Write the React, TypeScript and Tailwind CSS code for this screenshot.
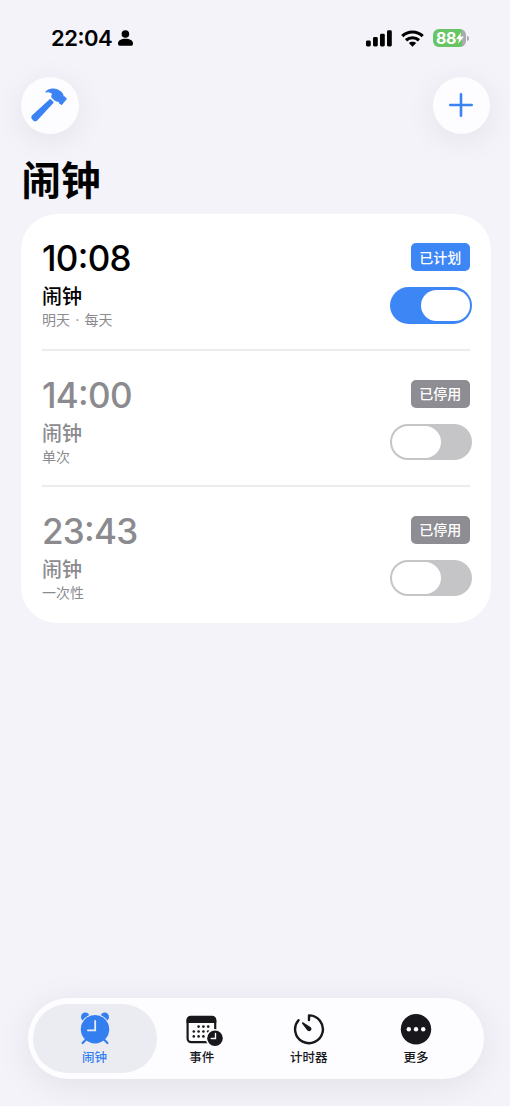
import React from "react";
import { clsx } from "clsx";

type Alarm = {
  time: string;
  title: string;
  note: string;
  status: string;
  enabled: boolean;
};

const alarms: Alarm[] = [
  { time: "10:08", title: "闹钟", note: "明天 · 每天", status: "已计划", enabled: true },
  { time: "14:00", title: "闹钟", note: "单次", status: "已停用", enabled: false },
  { time: "23:43", title: "闹钟", note: "一次性", status: "已停用", enabled: false },
];

const StatusBar = () => (
  <header className="flex h-[76.5px] items-center justify-between pl-[51px] pr-[41px]">
    <div className="flex items-center gap-[6px]">
      <span className="text-[22px] font-semibold leading-none tracking-[-0.5px] [font-feature-settings:'case']">22:04</span>
      <svg className="h-[16px] w-[15px]" viewBox="0 0 15 16">
        <circle cx="7.4" cy="4" r="3.8" />
        <path d="M0 13.400C0 10.500 3.300 8.800 7.500 8.800S15 10.500 15 13.400C15 15 14.200 15.800 12.800 15.800H2.200C.8 15.800 0 15 0 13.400Z" />
      </svg>
    </div>
    <div className="flex items-center">
      <svg className="h-[17px] w-[26px]" viewBox="0 0 26 17">
        <rect x="0" y="10.5" width="4.8" height="6" rx="1.4" />
        <rect x="7" y="7" width="4.8" height="9.5" rx="1.4" />
        <rect x="14" y="3.7" width="4.8" height="12.8" rx="1.4" />
        <rect x="21" y="0.3" width="4.8" height="16.2" rx="1.4" />
      </svg>
      <svg className="ml-[9px] h-[17px] w-[23px]" viewBox="0 0 23 17">
        <g fill="none" stroke="#000" strokeWidth="3.2">
          <path d="M1.300 6.100C7 .6 16 .6 21.700 6.100" />
          <path d="M5 10.300c3.700-3.400 9.300-3.400 13 0" />
        </g>
        <path d="M11.500 16.800 7.800 13.100c2-1.900 5.400-1.900 7.400 0Z" />
      </svg>
      <div className="ml-[9px] flex h-[18px] w-[33px] items-center rounded-[6px] bg-[linear-gradient(90deg,#68c566_88%,#ababaf_88%)] pl-[3px]">
        <span className="text-[16px] font-bold leading-none tracking-[-0.3px] text-white">88</span>
        <svg className="h-[12px] w-[8px]" viewBox="0 0 8 12" fill="#fff">
          <path d="M5.200.2.300 6.700c-.2.300 0 .6.300.6h2.600L2 11.800 7.500 5.300c.2-.3 0-.7-.3-.7H4.600Z" />
        </svg>
      </div>
      <span className="ml-[1px] h-[5px] w-[2px] rounded-r-full bg-[#ababaf]" />
    </div>
  </header>
);

const RoundButton = ({ label, children }: { label: string; children: React.ReactNode }) => (
  <button
    aria-label={label}
    className="flex h-[57.5px] w-[57.5px] items-center justify-center rounded-full bg-[#fdfdff] shadow-[0_6px_32px_rgba(0,0,0,0.07)]"
  >
    {children}
  </button>
);

const HammerIcon = () => (
  <svg className="-ml-px h-[34px] w-[36px]" viewBox="0 0 36 34" fill="#3b82f3" stroke="#3b82f3" strokeLinejoin="round">
    <path strokeWidth="1.6" d="M19.200 11.800 21.800 14.400 5.800 31.800Q4.200 33.200 2.700 31.800L1.700 30.800Q.4 29.200 2 27.700Z" />
    <path
      strokeWidth="1.2"
      d="M15 3.800C18 .5 23.500 .3 27 2.200C29.800 3.700 31.500 5.400 31.900 7.200C32 8.500 32.400 9.500 33.400 8.900L35.200 10.800L30.500 16.400L28.400 14.700C28.700 13.500 28 12.900 27.200 13.100C26 13.300 25 13 24.200 12.200L21.300 9.500C20.600 8.700 20.700 7.800 21.300 7C21.700 6.300 21.500 5.700 20.900 5.100C19.300 3.800 17.300 3.400 15 3.800Z"
    />
  </svg>
);

const Toggle = ({ on }: { on: boolean }) => (
  <button
    role="switch"
    aria-checked={on}
    aria-label="闹钟"
    className={clsx(
      "-mr-[2.5px] mt-[16px] flex h-[36.5px] w-[82.5px] items-center rounded-full px-[2.5px]",
      on ? "justify-end bg-[#3d86f6]" : "bg-[#c5c5c7]"
    )}
  >
    <span className="h-[31.5px] w-[48.5px] rounded-full bg-white" />
  </button>
);

const AlarmRow = ({ alarm }: { alarm: Alarm }) => (
  <li
    className={clsx(
      "flex h-[136.3px] justify-between border-b-2 border-[#ececee] pt-[25px] last:border-b-0",
      alarm.enabled ? "text-black" : "text-[#8b8b8f]"
    )}
  >
    <div>
      <p className="pt-px text-[35px] font-medium leading-[36px] tracking-[-0.7px] [font-feature-settings:'case']">
        {alarm.time}
      </p>
      <h2 className="mt-[9px] text-[20px] font-medium leading-[24px]">{alarm.title}</h2>
      <p className="mt-[2px] text-[14px] leading-[18px] text-[#8b8b8f] [word-spacing:1.3px]">{alarm.note}</p>
    </div>
    <div className="flex flex-col items-end pt-[4px]">
      <span
        className={clsx(
          "flex h-[28px] w-[58.5px] items-center justify-center rounded-[5px] text-[14px] font-medium text-white",
          alarm.enabled ? "bg-[#3d86f6]" : "bg-[#8e8d93]"
        )}
      >
        {alarm.status}
      </span>
      <Toggle on={alarm.enabled} />
    </div>
  </li>
);

const AlarmIcon = () => (
  <svg className="h-[34px] w-[30px]" viewBox="0 0 30 34">
    <g fill="#347ff0">
      <circle cx="5.3" cy="5.9" r="4.3" />
      <circle cx="24.7" cy="5.9" r="4.3" />
    </g>
    <circle cx="15" cy="18.3" r="15.2" fill="#ebebf2" />
    <circle cx="15" cy="18.3" r="14.2" fill="#347ff0" />
    <path d="m5.500 29-2.900 3M24.500 29l2.900 3" stroke="#347ff0" strokeWidth="2.2" strokeLinecap="round" />
    <path d="M15.200 10v9.300H7.900" fill="none" stroke="#ebebf2" strokeWidth="1.8" strokeLinecap="round" />
  </svg>
);

const EventIcon = () => (
  <svg className="ml-[5px] h-[36px] w-[38px]" viewBox="0 0 38 36">
    <rect x="1.6" y="6" width="27.6" height="25.2" rx="3.6" fill="none" stroke="#17171c" strokeWidth="2.2" />
    <path d="M.5 12V9a4.200 4.200 0 0 1 4.200-4.200h21.400A4.200 4.200 0 0 1 30.300 9v3Z" fill="#17171c" />
    <g fill="#17171c">
      <circle cx="12.6" cy="15.6" r="1.3" />
      <circle cx="17.4" cy="15.6" r="1.3" />
      <circle cx="22.2" cy="15.6" r="1.3" />
      <circle cx="7.8" cy="20.5" r="1.3" />
      <circle cx="12.6" cy="20.5" r="1.3" />
      <circle cx="17.4" cy="20.5" r="1.3" />
      <circle cx="22.2" cy="20.5" r="1.3" />
      <circle cx="7.8" cy="25.4" r="1.3" />
      <circle cx="12.6" cy="25.4" r="1.3" />
      <circle cx="17.4" cy="25.4" r="1.3" />
    </g>
    <circle cx="29" cy="27.2" r="9.3" fill="#fdfdff" />
    <circle cx="29" cy="27.2" r="7.8" fill="#17171c" />
    <path d="M29.500 22.400v5.100h-4.300" fill="none" stroke="#fff" strokeWidth="1.4" strokeLinecap="round" />
  </svg>
);

const TimerIcon = () => (
  <svg className="h-[34px] w-[32px]" viewBox="0 0 32 34">
    <path
      d="M16 9V4.400a13.900 13.900 0 1 1-10.500 4.800"
      fill="none"
      stroke="#17171c"
      strokeWidth="2.4"
      strokeLinecap="round"
      strokeLinejoin="round"
    />
    <path d="M9.200 11.400c.3-.3.700-.3 1.200 0l7 4.600c2.700 2.100-.3 5.800-3 3.400L9.200 12.700c-.4-.5-.4-.9 0-1.300Z" fill="#17171c" />
  </svg>
);

const MoreIcon = () => (
  <svg className="h-[34px] w-[32px]" viewBox="0 0 32 34">
    <circle cx="16" cy="18.3" r="15.2" fill="#17171c" />
    <g fill="#fff">
      <circle cx="8.8" cy="18.3" r="2.2" />
      <circle cx="16" cy="18.3" r="2.2" />
      <circle cx="23.2" cy="18.3" r="2.2" />
    </g>
  </svg>
);

const tabs = [
  { label: "闹钟", icon: <AlarmIcon /> },
  { label: "事件", icon: <EventIcon /> },
  { label: "计时器", icon: <TimerIcon /> },
  { label: "更多", icon: <MoreIcon /> },
];

const TabBar = () => (
  <nav className="ml-[27.5px] mb-[27.5px] mt-auto grid h-[80.5px] w-[456.5px] grid-cols-4 rounded-full bg-[#fdfdff] px-[14px] shadow-[0_6px_36px_rgba(0,0,0,0.08)]">
    {tabs.map((tab, i) => (
      <button
        key={tab.label}
        className={clsx("relative flex flex-col items-center pt-[13px]", i === 0 ? "text-[#347ff0]" : "text-[#17171c]")}
      >
        {i === 0 && <span className="absolute -inset-x-[8.5px] inset-y-[5.5px] rounded-full bg-[#ebebf2]" />}
        <span className="relative flex h-[34px] items-start">{tab.icon}</span>
        <span className="relative mr-px mt-[4.5px] text-[12.5px] font-medium leading-[16px]">{tab.label}</span>
      </button>
    ))}
  </nav>
);

export default function App() {
  return (
    <div className="flex h-[1106px] w-[510px] flex-col bg-[#f3f3f9] font-['Inter','Noto_Sans_CJK_SC',sans-serif] text-black">
      <StatusBar />
      <div className="flex justify-between pl-[21px] pr-[20px]">
        <RoundButton label="工具">
          <HammerIcon />
        </RoundButton>
        <RoundButton label="添加">
          <svg className="h-[24px] w-[24px]" viewBox="0 0 24 24">
            <path d="M12 1.300v21.400M1.300 12h21.400" stroke="#3b82f3" strokeWidth="2.6" strokeLinecap="round" />
          </svg>
        </RoundButton>
      </div>
      <h1 className="ml-[21.5px] mt-[23px] text-[39.5px] font-bold leading-[48px]">闹钟</h1>
      <ul className="ml-[21px] mr-[19.5px] mt-[9.3px] rounded-[36px] bg-white px-[21px]">
        {alarms.map((alarm) => (
          <AlarmRow key={alarm.time} alarm={alarm} />
        ))}
      </ul>
      <TabBar />
    </div>
  );
}
